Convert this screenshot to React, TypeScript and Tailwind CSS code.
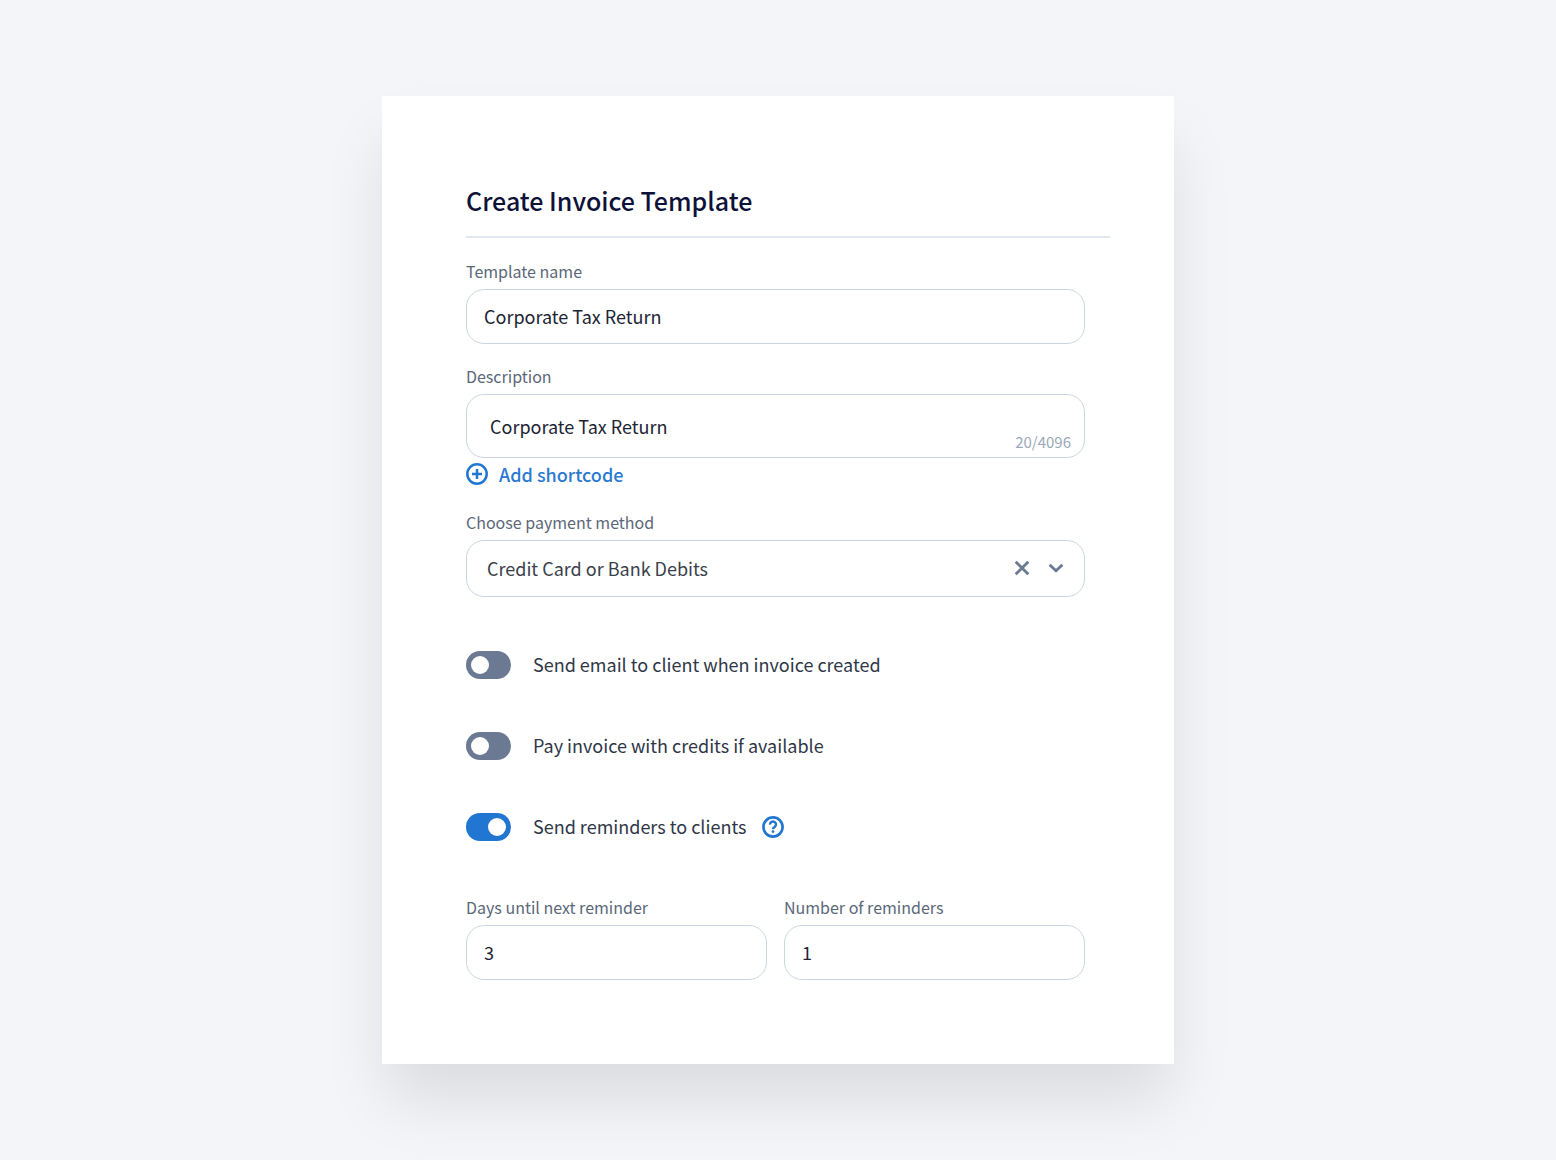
import React, { useState } from "react";

const labelClass = "block text-base leading-6 text-[#5b6779] mb-1.5";
const fieldClass =
  "block w-full h-[55px] px-[17px] pb-0.5 rounded-[18px] border border-[#cbd5e1] bg-white text-lg text-[#1e2433] focus:outline-none focus:border-[#2176d2]";

interface TextFieldProps {
  id: string;
  label: string;
  value: string;
  onChange: (value: string) => void;
}

const TextField: React.FC<TextFieldProps> = ({ id, label, value, onChange }) => {
  return (
    <div>
      <label htmlFor={id} className={labelClass}>
        {label}
      </label>
      <input
        type="text"
        id={id}
        className={fieldClass}
        value={value}
        onChange={(e) => onChange(e.target.value)}
      />
    </div>
  );
};

interface ToggleProps {
  id: string;
  label: string;
  checked: boolean;
  onChange: (value: boolean) => void;
  children?: React.ReactNode;
}

const Toggle: React.FC<ToggleProps> = ({ id, label, checked, onChange, children }) => {
  return (
    <div className="flex items-center h-7">
      <input
        type="checkbox"
        role="switch"
        id={id}
        className="flex items-center shrink-0 appearance-none w-[45px] h-7 px-[5px] rounded-full bg-[#6b7a92] checked:bg-[#2176d2] checked:justify-end cursor-pointer before:block before:size-[18px] before:rounded-full before:bg-white"
        checked={checked}
        onChange={(e) => onChange(e.target.checked)}
      />
      <label htmlFor={id} className="ml-[22px] pb-0.5 text-lg leading-6 text-[#2f3747] cursor-pointer">
        {label}
      </label>
      {children}
    </div>
  );
};

const App: React.FC = () => {
  const [name, setName] = useState("Corporate Tax Return");
  const [description, setDescription] = useState("Corporate Tax Return");
  const [method, setMethod] = useState("card-or-bank");
  const [sendEmail, setSendEmail] = useState(false);
  const [useCredits, setUseCredits] = useState(false);
  const [sendReminders, setSendReminders] = useState(true);
  const [days, setDays] = useState("3");
  const [reminders, setReminders] = useState("1");

  return (
    <main className="bg-[#f3f5f9] py-24 font-['Noto_Sans_CJK_SC','Noto_Sans',sans-serif]">
      <form
        className="mx-auto max-w-[792px] bg-white pt-[88px] pb-[84px] pl-[84px] pr-16 shadow-[0_40px_60px_-4px_rgba(0,0,0,0.1)]"
        onSubmit={(e) => e.preventDefault()}
      >
        <h1 className="text-[25px] leading-8 font-medium text-[#0e1238] pb-5 border-b-2 border-[#e2e8f0]">
          Create Invoice Template
        </h1>

        <div className="pr-[25px] pt-[21px]">
          <TextField id="templateName" label="Template name" value={name} onChange={setName} />

          <div className="mt-5">
            <label htmlFor="description" className={labelClass}>
              Description
            </label>
            <div className="relative">
              <textarea
                id="description"
                rows={1}
                maxLength={4096}
                className="block w-full h-16 resize-none py-[17px] px-[23px] rounded-[18px] border border-[#cbd5e1] bg-white text-lg leading-7 text-[#1e2433] focus:outline-none focus:border-[#2176d2]"
                value={description}
                onChange={(e) => setDescription(e.target.value)}
              />
              <span className="absolute right-3.5 bottom-1.5 text-[15px] leading-5 text-[#9aa8ba]">
                {description.length}/4096
              </span>
            </div>
            <button type="button" className="flex items-center gap-[11px] h-8 text-lg font-medium text-[#2b7ad0] cursor-pointer">
              <svg className="size-[22px]" viewBox="0 0 22 22" fill="none" stroke="#2176d2" strokeWidth="2.5" aria-hidden="true">
                <circle cx="11" cy="11" r="9.7" />
                <path d="M11 6v10M6 11h10" />
              </svg>
              Add shortcode
            </button>
          </div>

          <div className="mt-5">
            <label htmlFor="paymentMethod" className={labelClass}>
              Choose payment method
            </label>
            <div className="relative">
              <select
                id="paymentMethod"
                className="block w-full h-[57px] appearance-none px-5 pb-0.5 rounded-[18px] border border-[#cbd5e1] bg-white text-lg text-[#3a3f4b] focus:outline-none focus:border-[#2176d2]"
                value={method}
                onChange={(e) => setMethod(e.target.value)}
              >
                <option value=""></option>
                <option value="card-or-bank">Credit Card or Bank Debits</option>
              </select>
              <div className="absolute inset-y-0 right-5 flex items-center gap-4 pb-0.5 pointer-events-none">
                <button
                  type="button"
                  aria-label="Clear"
                  className="pointer-events-auto cursor-pointer"
                  onClick={() => setMethod("")}
                >
                  <svg className="size-[18px]" viewBox="0 0 18 18" fill="none" stroke="#6b7a92" strokeWidth="2.8">
                    <path d="M2.7 2.7l12.6 12.6M15.3 2.7L2.7 15.3" />
                  </svg>
                </button>
                <svg className="size-[18px]" viewBox="0 0 18 18" fill="none" stroke="#6b7a92" strokeWidth="2.8" aria-hidden="true">
                  <path d="M2.6 5.8L9 11.8l6.4-6" />
                </svg>
              </div>
            </div>
          </div>

          <div className="flex flex-col gap-[53px] my-[54px]">
            <Toggle
              id="sendEmail"
              label="Send email to client when invoice created"
              checked={sendEmail}
              onChange={setSendEmail}
            />
            <Toggle
              id="useCredits"
              label="Pay invoice with credits if available"
              checked={useCredits}
              onChange={setUseCredits}
            />
            <Toggle
              id="sendReminders"
              label="Send reminders to clients"
              checked={sendReminders}
              onChange={setSendReminders}
            >
              <button type="button" aria-label="Help" className="ml-4 cursor-pointer">
                <svg className="size-[22px]" viewBox="0 0 22 22" fill="none" stroke="#2176d2" strokeWidth="2.6">
                  <circle cx="11" cy="11" r="9.6" />
                  <path d="M8 8.6a3 2.9 0 1 1 4.8 2.2c-1.1.8-1.8 1.200-1.8 2.400" strokeWidth="2.4" />
                  <circle cx="11" cy="15.6" r="1.4" fill="#2176d2" stroke="none" />
                </svg>
              </button>
            </Toggle>
          </div>

          <div className="grid grid-cols-2 gap-[17px]">
            <TextField id="days" label="Days until next reminder" value={days} onChange={setDays} />
            <TextField id="reminders" label="Number of reminders" value={reminders} onChange={setReminders} />
          </div>
        </div>
      </form>
    </main>
  );
};

export default App;
